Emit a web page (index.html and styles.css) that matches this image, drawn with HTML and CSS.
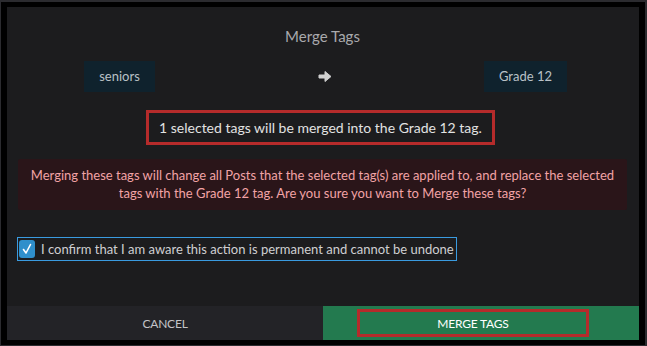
FILE: index.html
```html
<!DOCTYPE html>
<html>
<head>
<meta charset="utf-8">
<link rel="stylesheet" href="styles.css">
</head>
<body>
<div class="dialog">
  <div class="content">
    <div class="title">Merge Tags</div>
    <div class="tags">
      <div class="cell"><span class="chip">seniors</span></div>
      <div class="cell">
        <svg class="arrow" width="14" height="13" viewBox="0 0 14 13"><path d="M1 5 H7 V1.5 L13 6.5 L7 11.5 V8 H1 Z" fill="#d0d0d0" stroke="#d0d0d0" stroke-width="1" stroke-linejoin="round"/></svg>
      </div>
      <div class="cell"><span class="chip">Grade 12</span></div>
    </div>
    <div class="summary-wrap"><div class="summary">1 selected tags will be merged into the Grade 12 tag.</div></div>
    <div class="warning">Merging these tags will change all Posts that the selected tag(s) are applied to, and replace the selected tags with the Grade 12 tag. Are you sure you want to Merge these tags?</div>
    <label class="confirm">
      <span class="box"><svg width="10" height="12" viewBox="0 0 10 12"><path d="M1.5 6.5 L4 10 L8.5 1.5" fill="none" stroke="#fff" stroke-width="1.6" stroke-linecap="round" stroke-linejoin="round"/></svg></span>
      <span class="confirm-text">I confirm that I am aware this action is permanent and cannot be undone</span>
    </label>
  </div>
  <div class="footer">
    <div class="btn cancel">CANCEL</div>
    <div class="btn merge"><span class="merge-box">MERGE TAGS</span></div>
  </div>
</div>
</body>
</html>
```
FILE: styles.css
```css
html, body {
  margin: 0;
  padding: 0;
}
body {
  background: #2b2b2f;
  width: 647px;
  height: 346px;
  padding: 2px 2px 1px 1px;
  box-sizing: border-box;
  font-family: Lato, "Open Sans", sans-serif;
  overflow: hidden;
}
.dialog {
  height: 343px;
  box-sizing: border-box;
  border: 6px solid #000;
  border-top-width: 5px;
  border-bottom-width: 5px;
  background: #1c1c1e;
  display: flex;
  flex-direction: column;
}
.content {
  flex: 1;
  padding: 19px 12px 0 11px;
}
.title {
  text-align: center;
  color: #a9a9ad;
  font-size: 15px;
  line-height: 20px;
}
.tags {
  display: grid;
  grid-template-columns: 1fr 1fr 1fr;
  margin-top: 15px;
  height: 31px;
}
.cell {
  display: flex;
  align-items: center;
  justify-content: center;
}
.chip {
  background: #0f222d;
  color: #b9c1c7;
  font-size: 13px;
  line-height: 31px;
  padding: 0 15px;
}
.arrow { display: block; margin-left: 4px; }
.summary-wrap {
  display: flex;
  justify-content: center;
  margin-top: 18px;
}
.summary {
  border: 3px solid #b52b2b;
  color: #e2e2e2;
  font-size: 14px;
  line-height: 29px;
  padding: 0 10px;
  width: 323px;
  text-align: center;
  margin-left: -4px;
}
.warning {
  margin-top: 14px;
  background: #2a1519;
  color: #f2a3a6;
  font-size: 13px;
  line-height: 18px;
  text-align: center;
  padding: 7px 8px 8px;
  border-radius: 2px;
}
.confirm {
  margin-top: 27px;
  margin-left: -1px;
  display: inline-flex;
  align-items: center;
  border: 1px solid #3a9be0;
  height: 24px;
  box-sizing: border-box;
  padding-left: 1px;
  padding-right: 2px;
}
.box {
  width: 16px;
  height: 18px;
  background: #2f8fcb;
  border-radius: 3px;
  display: flex;
  align-items: center;
  justify-content: center;
}
.confirm-text {
  color: #cfcfd2;
  font-size: 13px;
  margin-left: 6px;
}
.footer {
  display: flex;
  height: 34px;
}
.btn {
  flex: 1;
  display: flex;
  align-items: center;
  justify-content: center;
  font-size: 12px;
  letter-spacing: -0.2px;
}
.cancel {
  background: #232327;
  color: #c4c4c8;
}
.merge {
  background: #237a4f;
  color: #fff;
}
.merge-box {
  border: 3px solid #b52b2b;
  width: 232px;
  height: 28px;
  box-sizing: border-box;
  display: flex;
  align-items: center;
  justify-content: center;
  margin-left: -16px;
}
```
